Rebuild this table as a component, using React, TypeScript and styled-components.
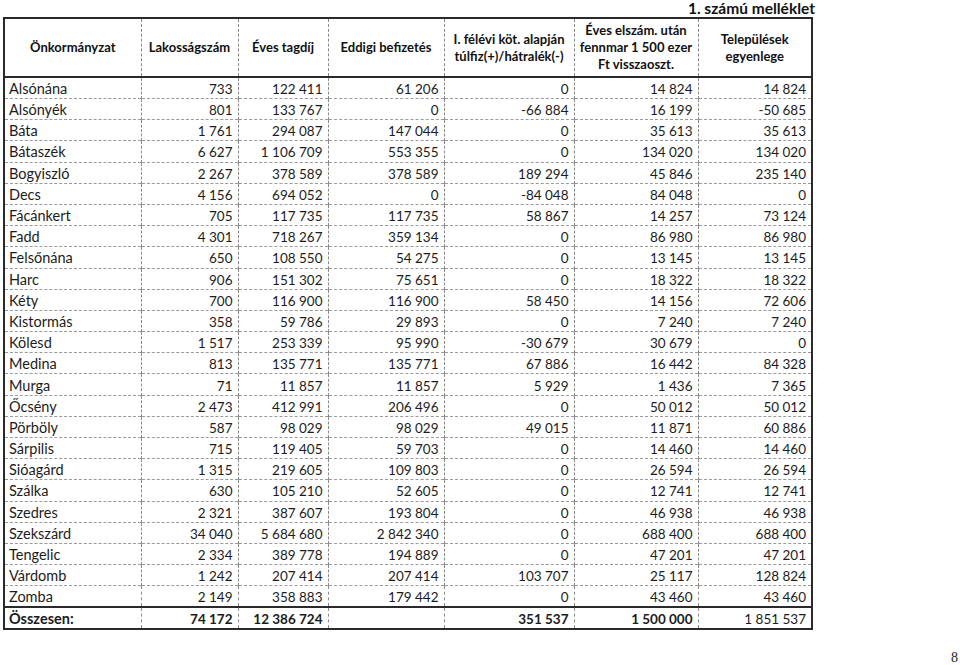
import React from "react";
import styled, { createGlobalStyle } from "styled-components";

const Global = createGlobalStyle`
  html, body { margin: 0; padding: 0; background: #fff; }
  body { font-family: Lato, "Open Sans", sans-serif; color: #1a1a1a; }
`;

const Page = styled.div`
  width: 960px;
  height: 665px;
  box-sizing: border-box;
  padding: 0 0 0 3px;
  display: flex;
  flex-direction: column;
`;

const Title = styled.div`
  width: 812px;
  height: 17px;
  text-align: right;
  font-weight: 700;
  font-size: 15.5px;
  line-height: 18px;
  margin-top: -1px;
  color: #111;
`;

const Table = styled.table`
  width: 808px;
  table-layout: fixed;
  border-collapse: collapse;
  border: 2px solid #2a2a2a;
  margin-top: 1px;
`;

const HeadRow = styled.tr`
  height: 59px;
  border-bottom: 2px solid #2a2a2a;
`;

const HeadCell = styled.th`
  font-weight: 700;
  font-size: 13px;
  line-height: 17px;
  color: #111;
  text-align: center;
  vertical-align: middle;
  padding: 0 3px;
  border-right: 1px dashed #888;
  &:last-child { border-right: none; }
`;

const Row = styled.tr<{ $total?: boolean }>`
  height: 21.2px;
  border-bottom: 1px dashed #9a9a9a;
  border-top: ${(p) => (p.$total ? "2px solid #2a2a2a" : "none")};
  &:last-child { border-bottom: none; }
`;

const Cell = styled.td<{ $left?: boolean; $bold?: boolean }>`
  font-size: ${(p) => (p.$left ? "14.5px" : "13.5px")};
  line-height: 18px;
  padding: 2px 5px 0 4px;
  vertical-align: middle;
  text-align: ${(p) => (p.$left ? "left" : "right")};
  font-weight: ${(p) => (p.$bold ? 700 : 400)};
  color: #1c1c1c;
  white-space: nowrap;
  overflow: hidden;
  border-right: 1px dashed #8a8a8a;
  &:last-child { border-right: none; }
`;

const Footer = styled.div`
  width: 955px;
  margin-top: 20px;
  text-align: right;
  font-family: "Liberation Serif", serif;
  font-size: 14px;
  line-height: 16px;
  color: #222;
`;

const widths = [137, 97, 90, 116, 130, 124, 114];

const rows: string[][] = [
  ["Alsónána", "733", "122 411", "61 206", "0", "14 824", "14 824"],
  ["Alsónyék", "801", "133 767", "0", "-66 884", "16 199", "-50 685"],
  ["Báta", "1 761", "294 087", "147 044", "0", "35 613", "35 613"],
  ["Bátaszék", "6 627", "1 106 709", "553 355", "0", "134 020", "134 020"],
  ["Bogyiszló", "2 267", "378 589", "378 589", "189 294", "45 846", "235 140"],
  ["Decs", "4 156", "694 052", "0", "-84 048", "84 048", "0"],
  ["Fácánkert", "705", "117 735", "117 735", "58 867", "14 257", "73 124"],
  ["Fadd", "4 301", "718 267", "359 134", "0", "86 980", "86 980"],
  ["Felsőnána", "650", "108 550", "54 275", "0", "13 145", "13 145"],
  ["Harc", "906", "151 302", "75 651", "0", "18 322", "18 322"],
  ["Kéty", "700", "116 900", "116 900", "58 450", "14 156", "72 606"],
  ["Kistormás", "358", "59 786", "29 893", "0", "7 240", "7 240"],
  ["Kölesd", "1 517", "253 339", "95 990", "-30 679", "30 679", "0"],
  ["Medina", "813", "135 771", "135 771", "67 886", "16 442", "84 328"],
  ["Murga", "71", "11 857", "11 857", "5 929", "1 436", "7 365"],
  ["Őcsény", "2 473", "412 991", "206 496", "0", "50 012", "50 012"],
  ["Pörböly", "587", "98 029", "98 029", "49 015", "11 871", "60 886"],
  ["Sárpilis", "715", "119 405", "59 703", "0", "14 460", "14 460"],
  ["Sióagárd", "1 315", "219 605", "109 803", "0", "26 594", "26 594"],
  ["Szálka", "630", "105 210", "52 605", "0", "12 741", "12 741"],
  ["Szedres", "2 321", "387 607", "193 804", "0", "46 938", "46 938"],
  ["Szekszárd", "34 040", "5 684 680", "2 842 340", "0", "688 400", "688 400"],
  ["Tengelic", "2 334", "389 778", "194 889", "0", "47 201", "47 201"],
  ["Várdomb", "1 242", "207 414", "207 414", "103 707", "25 117", "128 824"],
  ["Zomba", "2 149", "358 883", "179 442", "0", "43 460", "43 460"],
];

const total = ["Összesen:", "74 172", "12 386 724", "", "351 537", "1 500 000", "1 851 537"];
const totalBold = [true, true, true, false, true, true, false];

export default function App() {
  return (
    <Page>
      <Global />
      <Title>1.&nbsp;számú melléklet</Title>
      <Table>
        <colgroup>
          {widths.map((w, i) => (
            <col key={i} style={{ width: w }} />
          ))}
        </colgroup>
        <thead>
          <HeadRow>
            <HeadCell>Önkormányzat</HeadCell>
            <HeadCell>Lakosságszám</HeadCell>
            <HeadCell>Éves tagdíj</HeadCell>
            <HeadCell>Eddigi befizetés</HeadCell>
            <HeadCell>
              I. félévi köt. alapján
              <br />
              túlfiz(+)/hátralék(-)
            </HeadCell>
            <HeadCell>
              Éves elszám. után
              <br />
              fennmar 1 500 ezer
              <br />
              Ft visszaoszt.
            </HeadCell>
            <HeadCell>
              Települések
              <br />
              egyenlege
            </HeadCell>
          </HeadRow>
        </thead>
        <tbody>
          {rows.map((r) => (
            <Row key={r[0]}>
              {r.map((v, i) => (
                <Cell key={i} $left={i === 0}>
                  {v}
                </Cell>
              ))}
            </Row>
          ))}
          <Row $total>
            {total.map((v, i) => (
              <Cell key={i} $left={i === 0} $bold={totalBold[i]}>
                {v}
              </Cell>
            ))}
          </Row>
        </tbody>
      </Table>
      <Footer>8</Footer>
    </Page>
  );
}
